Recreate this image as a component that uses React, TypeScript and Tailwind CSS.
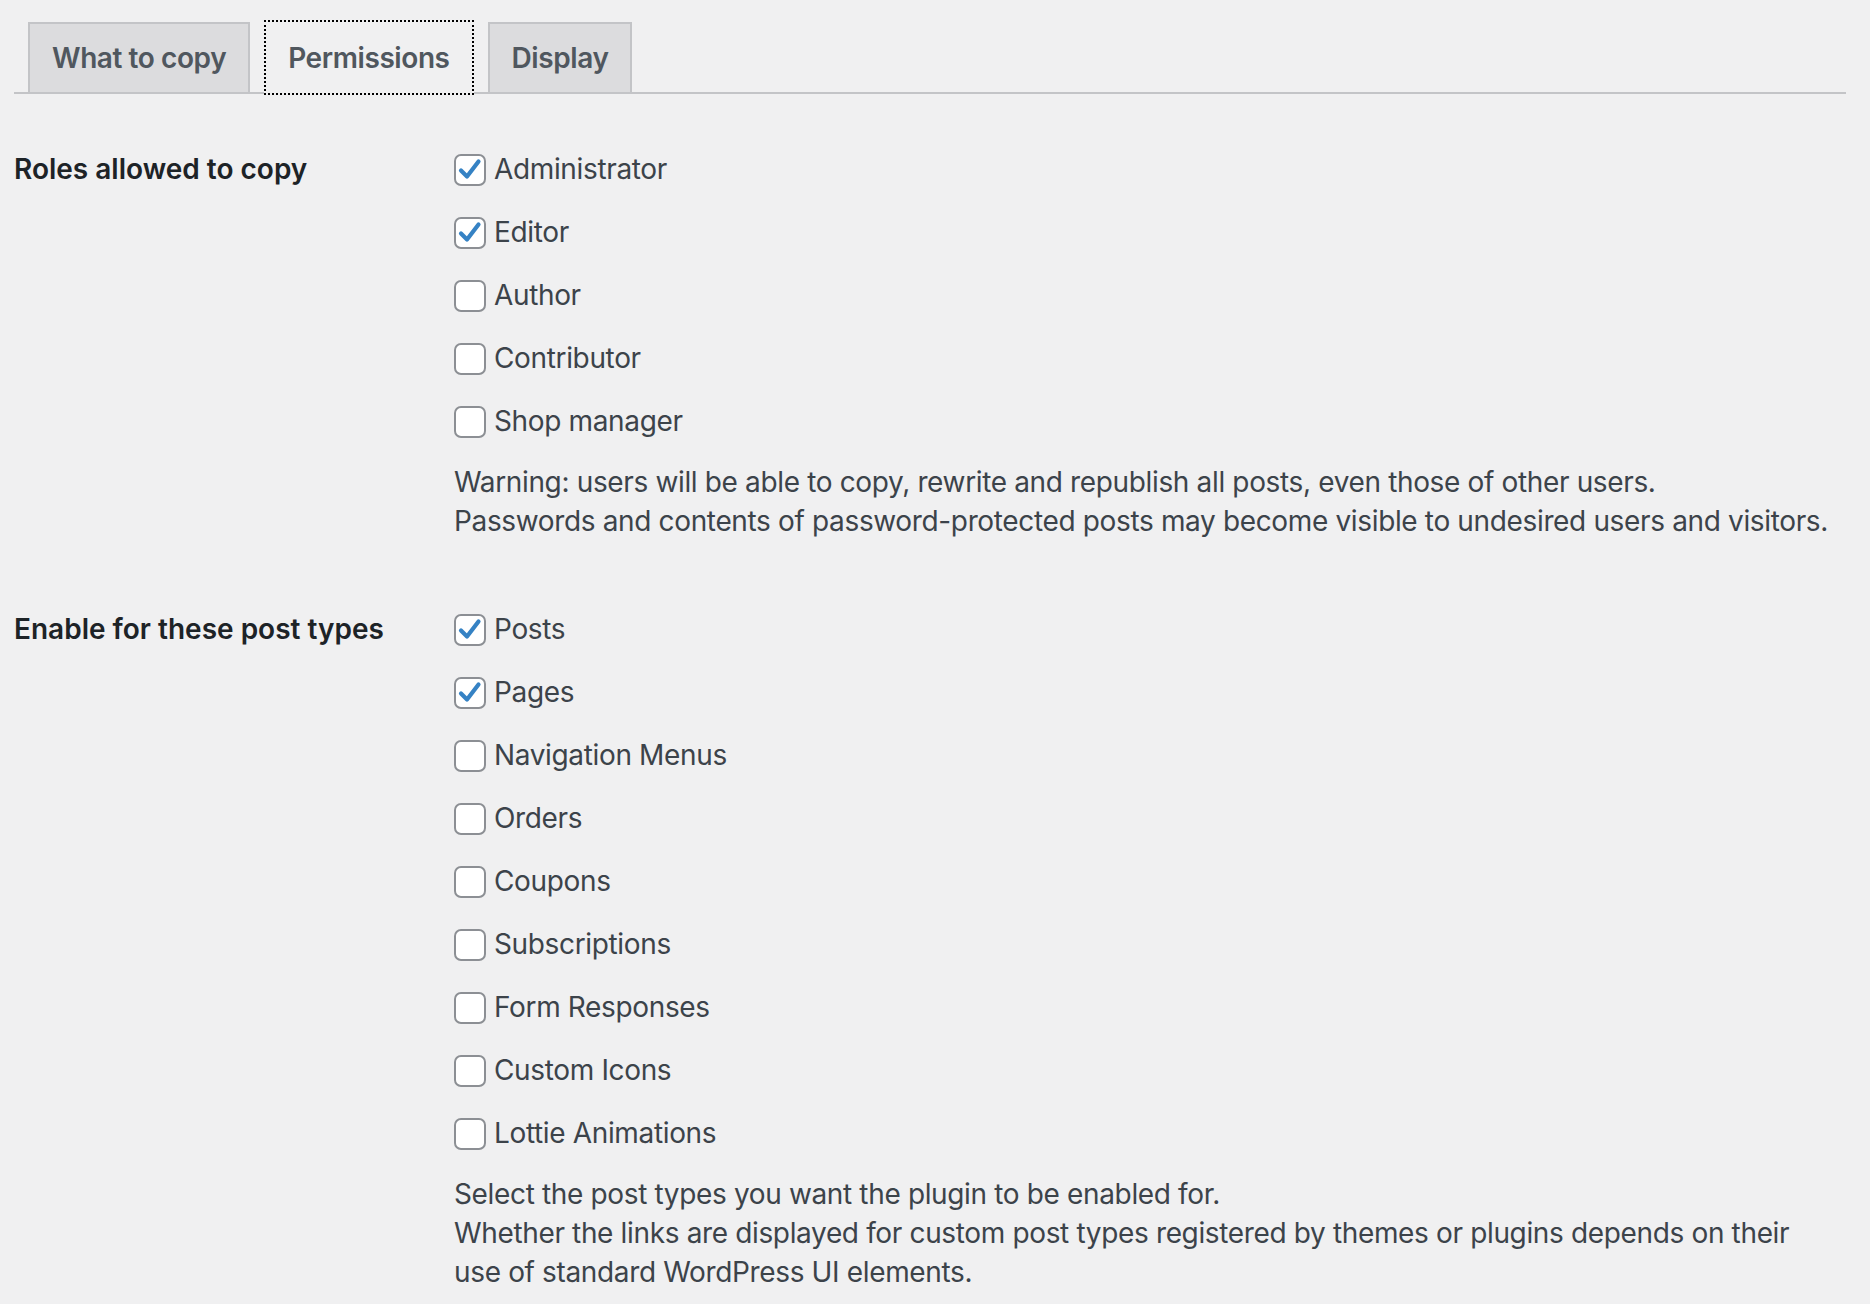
import React from "react";

const font = { fontFamily: "Inter, 'Noto Sans', 'Liberation Sans', sans-serif" };

function Box({ checked }: { checked: boolean }) {
  return (
    <span className="relative inline-flex h-[32px] w-[32px] shrink-0 items-center justify-center rounded-[7px] border-2 border-[#8c8f94] bg-white">
      {checked && (
        <svg width="28" height="28" viewBox="0 0 28 28" className="absolute left-[0px] top-[0px]">
          <path d="M5 14.5 L11 20.5 L22.5 5.5" fill="none" stroke="#3582c4" strokeWidth="4.2" strokeLinecap="round" strokeLinejoin="round" />
        </svg>
      )}
    </span>
  );
}

function Item({ label, checked }: { label: string; checked?: boolean }) {
  return (
    <label className="mb-[24px] flex h-[39px] items-center gap-[8px] text-[28px] leading-[39px] text-[#3c434a]">
      <Box checked={!!checked} />
      <span>{label}</span>
    </label>
  );
}

export default function App() {
  const tabBase =
    "flex h-[70px] items-center border-2 px-[22px] text-[28px] font-semibold leading-none tracking-[-0.015em]";
  return (
    <div className="min-h-[1304px] w-[1870px] bg-[#f0f0f1] tracking-[-0.022em]" style={font}>
      <div className="pl-[14px] pr-[24px] pt-[23px]">
        <div className="flex h-[71px] items-end gap-[14px] border-b-2 border-[#c3c4c7] pl-[14px]">
          <div className={`${tabBase} mb-[-2px] h-[72px] border-[#c3c4c7] bg-[#dcdcde] text-[#50575e]`}>What to copy</div>
          <div className={`${tabBase} mb-[-3px] h-[75px] border-transparent bg-[#f0f0f1] text-[#50575e] outline-2 outline-dotted outline-black outline-offset-[-2px]`}>Permissions</div>
          <div className={`${tabBase} mb-[-2px] h-[72px] border-[#c3c4c7] bg-[#dcdcde] text-[#50575e]`}>Display</div>
        </div>
      </div>

      <div className="px-[14px]">
        <div className="mt-[56px] flex">
          <div className="w-[440px] shrink-0 text-[28px] font-semibold leading-[39px] tracking-[0em] text-[#1d2327]">Roles allowed to copy</div>
          <div>
            <Item label="Administrator" checked />
            <Item label="Editor" checked />
            <Item label="Author" />
            <Item label="Contributor" />
            <Item label="Shop manager" />
            <p className="mt-[-2px] text-[28px] leading-[39px] text-[#3c434a]">
              Warning: users will be able to copy, rewrite and republish all posts, even those of other users.
              <br />
              Passwords and contents of password-protected posts may become visible to undesired users and visitors.
            </p>
          </div>
        </div>

        <div className="mt-[69px] flex">
          <div className="w-[440px] shrink-0 text-[28px] font-semibold leading-[39px] tracking-[0em] text-[#1d2327]">Enable for these post types</div>
          <div>
            <Item label="Posts" checked />
            <Item label="Pages" checked />
            <Item label="Navigation Menus" />
            <Item label="Orders" />
            <Item label="Coupons" />
            <Item label="Subscriptions" />
            <Item label="Form Responses" />
            <Item label="Custom Icons" />
            <Item label="Lottie Animations" />
            <p className="mt-[-2px] max-w-[1400px] text-[28px] leading-[39px] text-[#3c434a]">
              Select the post types you want the plugin to be enabled for.
              <br />
              Whether the links are displayed for custom post types registered by themes or plugins depends on their
              <br />
              use of standard WordPress UI elements.
            </p>
          </div>
        </div>
      </div>
    </div>
  );
}
